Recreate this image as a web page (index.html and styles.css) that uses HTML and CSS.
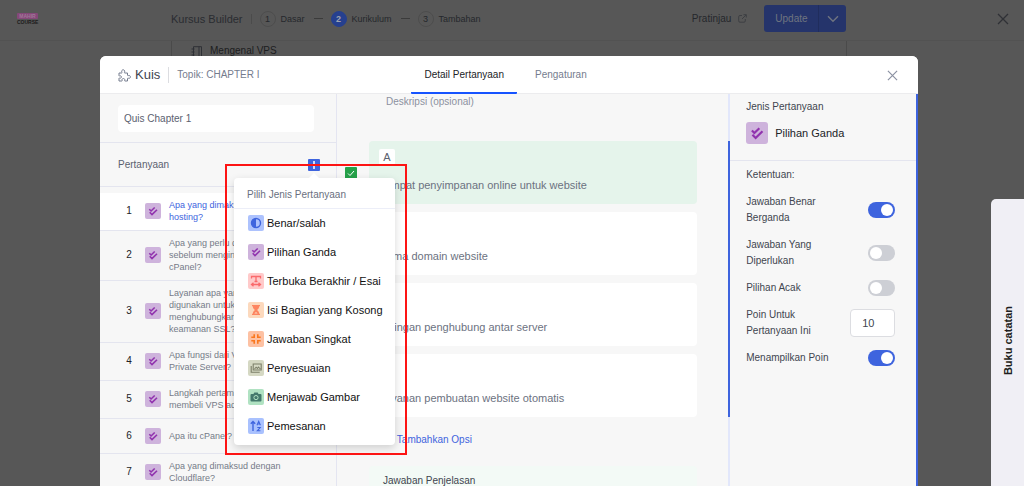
FILE: index.html
```html
<!DOCTYPE html>
<html lang="id">
<head>
  <meta charset="UTF-8">
  <meta name="viewport" content="width=device-width, initial-scale=1.0">
  <title>Kursus Builder</title>
  <link rel="stylesheet" href="styles.css">
</head>
<body>
  <!-- Icons shared by several rows -->
  <svg class="sprite" aria-hidden="true">
    <symbol id="i-check" viewBox="0 0 16 16"><path d="M4.300 6.200l1.800 1.800 3.600-3.500M4.700 9.300l2.300 2.300L12 6.700" fill="none" stroke="currentColor" stroke-width="1.600"/></symbol>
    <symbol id="i-close" viewBox="0 0 12 12"><path d="M1 1l10 10M11 1L1 11" fill="none" stroke="currentColor" stroke-width="1.3"/></symbol>
  </svg>

  <!-- Page behind the modal -->
  <header class="topbar">
    <a href="#" class="logo"><span class="logo-top">MAHIR</span><span class="logo-sub">COURSE</span></a>
    <div class="topbar-main">
      <span class="builder-title">Kursus Builder</span>
      <ol class="stepper">
        <li><span class="num">1</span>Dasar</li>
        <li class="current"><span class="num">2</span>Kurikulum</li>
        <li><span class="num">3</span>Tambahan</li>
      </ol>
      <a href="#" class="preview">Pratinjau
        <svg width="9" height="9" viewBox="0 0 9 9"><path d="M4 1.5H2a1.3 1.3 0 0 0-1.3 1.3v4A1.3 1.3 0 0 0 2 8.2h4a1.3 1.3 0 0 0 1.3-1.3V5M5.5.7h2.8v2.8M8.2.8L4 5" fill="none" stroke="currentColor" stroke-width="1"/></svg>
      </a>
      <div class="update">
        <button type="button" class="update-btn">Update</button>
        <button type="button" class="update-more" aria-label="Opsi lain"><svg width="12" height="8" viewBox="0 0 12 8"><path d="M1 1.2l5 5 5-5" fill="none" stroke="currentColor" stroke-width="1.4"/></svg></button>
      </div>
    </div>
    <button type="button" class="page-close" aria-label="Keluar"><svg width="12" height="12"><use href="#i-close"/></svg></button>
  </header>
  <div class="curriculum">
    <svg width="11" height="12" viewBox="0 0 11 12"><path d="M2.5.7h8v10.6h-8zM8 .7v10.6M.5 3h3M.5 6h3M.5 9h3" fill="none" stroke="currentColor"/></svg>
    <span>Mengenal VPS</span>
  </div>

  <!-- Quiz modal -->
  <div class="modal" role="dialog" aria-label="Kuis">
    <div class="modal-head">
      <div class="modal-title">
        <svg width="13" height="13" viewBox="0 0 13 13"><path d="M1 4h2.6c.5 0 .5-.5.3-.9C3.300 1.900 4 .8 5.200.8s1.900 1.100 1.300 2.300c-.2.4-.2.9.3.9h2.700v2.200c0 .5.5.6.9.4 1-.5 2 .2 2 1.300s-1 1.800-2 1.300c-.4-.2-.9-.1-.9.4V12H7c-.5 0-.5-.4-.3-.8.4-.9-.3-1.700-1.300-1.700s-1.700.8-1.300 1.700c.2.4.2.8-.3.800H1V9.400c0-.5.400-.5.800-.3.9.3 1.600-.3 1.600-1.100S2.700 6.500 1.800 6.900c-.4.2-.8.2-.8-.3z" fill="none" stroke="currentColor"/></svg>
        <h1>Kuis</h1>
        <span class="topic">Topik: CHAPTER I</span>
      </div>
      <nav class="tabs">
        <a href="#" class="active">Detail Pertanyaan</a>
        <a href="#">Pengaturan</a>
      </nav>
      <button type="button" class="modal-close" aria-label="Tutup"><svg width="11" height="11"><use href="#i-close"/></svg></button>
    </div>

    <div class="modal-body">
      <!-- Question list -->
      <aside class="sidebar">
        <div class="quiz-name"><input type="text" value="Quis Chapter 1" aria-label="Judul kuis"></div>
        <div class="list-head">
          <h2>Pertanyaan</h2>
          <div class="add-wrap">
            <button type="button" class="add" aria-label="Tambah pertanyaan"><svg width="12" height="12" viewBox="0 0 12 12"><path d="M6 2v8M2 6h8" fill="none" stroke="currentColor" stroke-width="1.500"/></svg></button>
            <div class="type-menu">
              <h3>Pilih Jenis Pertanyaan</h3>
              <ul>
                <li><button type="button"><span class="ico blue"><svg viewBox="0 0 16 16"><circle cx="8" cy="8" r="4.500" fill="none" stroke="currentColor" stroke-width="1.400"/><path d="M8 3.500a4.500 4.500 0 0 0 0 9z" fill="currentColor"/></svg></span>Benar/salah</button></li>
                <li><button type="button"><span class="ico purple"><svg><use href="#i-check"/></svg></span>Pilihan Ganda</button></li>
                <li><button type="button"><span class="ico red"><svg viewBox="0 0 16 16"><path d="M3.500 5.500v-2h9v2M8 3.500v5M6.500 8.500h3M3.500 11.500h9M5.500 9.800l-2 1.700 2 1.700M10.500 9.800l2 1.700-2 1.700" fill="none" stroke="currentColor" stroke-width="1.300"/></svg></span>Terbuka Berakhir / Esai</button></li>
                <li><button type="button"><span class="ico peach"><svg viewBox="0 0 16 16"><path d="M4 3h8v1.300h-.8c0 1.900-1 2.900-2.100 3.700 1.100.8 2.100 1.800 2.100 3.700h.8V13H4v-1.300h.8c0-1.900 1-2.900 2.100-3.700-1.100-.8-2.100-1.800-2.100-3.700H4z" fill="currentColor"/><path d="M6.300 11.500L8 9.900l1.700 1.600z" fill="#fcd9bd"/></svg></span>Isi Bagian yang Kosong</button></li>
                <li><button type="button"><span class="ico orange"><svg viewBox="0 0 16 16"><path d="M6.200 3.300v2.900H3.300M9.800 3.300v2.900h2.900M6.200 12.700V9.800H3.300M9.800 12.700V9.800h2.900" fill="none" stroke="currentColor" stroke-width="1.600"/></svg></span>Jawaban Singkat</button></li>
                <li><button type="button"><span class="ico olive"><svg viewBox="0 0 16 16"><path d="M5.200 4h8v6h-8zM3.200 6v6.200h8.500M6.500 9l1.600-1.800 1.300 1.300L10.500 7l1.800 2" fill="none" stroke="currentColor" stroke-width="1.100"/></svg></span>Penyesuaian</button></li>
                <li><button type="button"><span class="ico green"><svg viewBox="0 0 16 16"><path d="M3.500 5H5.500l.8-1.500h3.400l.8 1.500h2a1 1 0 0 1 1 1v5.500a1 1 0 0 1-1 1h-9a1 1 0 0 1-1-1V6a1 1 0 0 1 1-1z" fill="currentColor"/><circle cx="8" cy="8.600" r="2.100" fill="none" stroke="#b0e2c2" stroke-width="1"/></svg></span>Menjawab Gambar</button></li>
                <li><button type="button"><span class="ico sky"><svg viewBox="0 0 16 16"><path d="M5 13V3.500M2.800 5.700L5 3.500l2.200 2.200" fill="none" stroke="currentColor" stroke-width="1.400"/><path d="M9 7.300l1.700-4 1.700 4M9.500 6h2.400M9.300 9.500h2.900l-2.900 3.300h3.100" fill="none" stroke="currentColor" stroke-width="1.100"/></svg></span>Pemesanan</button></li>
              </ul>
            </div>
          </div>
        </div>
        <ol class="questions">
          <li class="active"><span class="no">1</span><span class="ico purple"><svg><use href="#i-check"/></svg></span><a href="#">Apa yang dimaksud dengan hosting?</a></li>
          <li><span class="no">2</span><span class="ico purple"><svg><use href="#i-check"/></svg></span><a href="#">Apa yang perlu diketahui sebelum menginstalasi cPanel?</a></li>
          <li><span class="no">3</span><span class="ico purple"><svg><use href="#i-check"/></svg></span><a href="#">Layanan apa yang digunakan untuk menghubungkan layanan keamanan SSL?</a></li>
          <li><span class="no">4</span><span class="ico purple"><svg><use href="#i-check"/></svg></span><a href="#">Apa fungsi dari Virtual Private Server?</a></li>
          <li><span class="no">5</span><span class="ico purple"><svg><use href="#i-check"/></svg></span><a href="#">Langkah pertama untuk membeli VPS adalah?</a></li>
          <li><span class="no">6</span><span class="ico purple"><svg><use href="#i-check"/></svg></span><a href="#">Apa itu cPanel?</a></li>
          <li><span class="no">7</span><span class="ico purple"><svg><use href="#i-check"/></svg></span><a href="#">Apa yang dimaksud dengan Cloudflare?</a></li>
        </ol>
      </aside>

      <!-- Answer options -->
      <main class="editor">
        <p class="desc">Deskripsi (opsional)</p>
        <ul class="options">
          <li class="correct">
            <span class="mark"><svg width="8" height="8" viewBox="0 0 8 8"><path d="M1 4.500l2 2L7 2" fill="none" stroke="currentColor" stroke-width="1"/></svg></span>
            <span class="letter">A</span><p>Tempat penyimpanan online untuk website</p>
          </li>
          <li><span class="letter">B</span><p>Nama domain website</p></li>
          <li><span class="letter">C</span><p>Jaringan penghubung antar server</p></li>
          <li><span class="letter">D</span><p>Layanan pembuatan website otomatis</p></li>
        </ul>
        <button type="button" class="add-option"><span>+</span>Tambahkan Opsi</button>
        <div class="explain">Jawaban Penjelasan</div>
      </main>
      <div class="scroll"></div>

      <!-- Question settings -->
      <aside class="settings">
        <div class="type">
          <h2>Jenis Pertanyaan</h2>
          <p><span class="ico purple big"><svg><use href="#i-check"/></svg></span>Pilihan Ganda</p>
        </div>
        <form class="rules">
          <h2>Ketentuan:</h2>
          <div class="rule"><label for="multi">Jawaban Benar Berganda</label><input type="checkbox" id="multi" class="switch" checked></div>
          <div class="rule"><label for="required">Jawaban Yang Diperlukan</label><input type="checkbox" id="required" class="switch"></div>
          <div class="rule"><label for="random">Pilihan Acak</label><input type="checkbox" id="random" class="switch"></div>
          <div class="rule"><label for="points">Poin Untuk Pertanyaan Ini</label><input type="text" id="points" class="points" value="10"></div>
          <div class="rule"><label for="show">Menampilkan Poin</label><input type="checkbox" id="show" class="switch" checked></div>
        </form>
      </aside>
    </div>
  </div>

  <button type="button" class="notebook"><span>Buku catatan</span></button>
  <div class="highlight"></div>
</body>
</html>
```
FILE: styles.css
```css
* { box-sizing: border-box; }
html, body { height: 100%; }
body { margin: 0; overflow: hidden; background: #575757; color: #41454f; font: 10px/16px "Liberation Sans", Arial, sans-serif; }
h1, h2, h3, p, ul, ol { margin: 0; padding: 0; font-weight: normal; }
h2, h3 { font-size: 10px; }
ul, ol { list-style: none; }
a { color: inherit; text-decoration: none; }
button { font: inherit; color: inherit; background: none; border: none; padding: 0; cursor: pointer; }
input { font: inherit; margin: 0; }
svg { display: block; flex: none; }
.sprite { position: absolute; width: 0; height: 0; }

/* page header */
.topbar { display: flex; align-items: center; height: 41px; padding: 0 15px 3px 17px; border-bottom: 1px solid #525252; color: #25272c; }
.logo { width: 21px; text-align: center; font-weight: bold; font-size: 5px; line-height: 6px; }
.logo span { display: block; }
.logo-top { background: #854879; color: #a07698; border-radius: 1px; }
.logo-sub { color: #1b1b1b; }
.topbar-main { display: flex; align-items: center; width: 68%; margin-left: 133px; }
.builder-title { font-size: 11px; padding-right: 8px; border-right: 1px solid #4b4b4b; line-height: 10px; color: #2a2c31; }
.stepper { display: flex; align-items: center; margin-left: 8px; font-size: 9px; }
.stepper li { display: flex; align-items: center; gap: 5px; }
.stepper li + li::before { content: ""; width: 9px; height: 1px; margin: 0 3px 0 9px; background: #3b3b3b; }
.num { width: 16px; height: 16px; line-height: 14px; text-align: center; border: 1px solid #4d4d4d; border-radius: 50%; }
.current .num { background: #26408f; border-color: #26408f; color: #a0a4b0; font-weight: bold; }
.preview { display: flex; align-items: center; gap: 7px; margin-left: auto; }
.preview svg { color: #3d3f43; }
.update { display: flex; height: 27px; margin-left: 17px; background: #25346b; border-radius: 3px; color: #6f7480; }
.update-btn { padding: 0 10px 0 11px; }
.update-more { padding: 0 7px 0 8px; border-left: 1px solid #202d5d; }
.page-close { margin-left: auto; color: #2f3136; }
.curriculum { display: flex; gap: 8px; width: 66%; height: 80px; margin-left: 171px; padding: 2px 19px; border: 1px solid #4a4a4a; border-top: none; color: #1c1d20; }
.curriculum svg { margin-top: 3px; color: #2f3136; }

/* modal */
.modal { position: absolute; top: 56px; bottom: 0; left: 100px; width: calc(80% - 1px); display: flex; flex-direction: column; background: #f7f7f7; border-radius: 6px 6px 0 0; }
.modal-head { flex: none; display: grid; grid-template-columns: 1fr auto 1fr; align-items: center; height: 38px; padding: 0 20px 0 18px; background: #fff; border-bottom: 1px solid #ececee; border-radius: 6px 6px 0 0; }
.modal-title { display: flex; align-items: center; gap: 4px; color: #757c8e; }
.modal-title h1 { font-size: 13px; color: #41454f; }
.topic { margin-left: 4px; padding-left: 8px; border-left: 1px solid #dcdde1; }
.tabs { display: flex; align-self: stretch; }
.tabs a { padding: 11px 18px 0 13px; line-height: 16px; color: #757c8e; height: 38px; }
.tabs .active { color: #212327; padding-right: 13px; margin-right: 5px; border-bottom: 2px solid #1653ff; border-radius: 1px; }
.modal-close { justify-self: end; color: #8b91a2; }
.modal-body { flex: 1; min-height: 0; display: grid; grid-template-columns: 237px 1fr 2px 188px; }

/* icon tiles */
.ico { flex: none; width: 16px; height: 16px; border-radius: 2px; }
.ico svg { width: 100%; height: 100%; }
.ico.big { width: 22px; height: 22px; border-radius: 3px; }
.blue { background: #adc2fd; color: #3e64de; }
.purple { background: #ceb3dc; color: #9133ae; }
.red { background: #ffcaca; color: #fa6a6c; }
.peach { background: #fcd9bd; color: #fd8560; }
.orange { background: #fdc1a3; color: #fa781e; }
.olive { background: #d5d8c3; color: #7c7f69; }
.green { background: #b0e2c2; color: #44796c; }
.sky { background: #a9c1fe; color: #3e64de; }

/* left column */
.sidebar { border-right: 1px solid #e4e5f1; }
.quiz-name { padding: 11px 22px 10px 18px; border-bottom: 1px solid #e4e5ef; }
.quiz-name input { display: block; width: 100%; height: 27px; padding: 0 6px; border: none; border-radius: 4px; background: #fff; color: #5b616f; }
.list-head { display: flex; align-items: center; justify-content: space-between; height: 44px; padding: 0 16px 0 18px; border-bottom: 1px solid #e4e5ef; color: #5b616f; }
.add-wrap { position: relative; }
.add { display: block; width: 12px; height: 12px; border-radius: 1px; background: #3e64de; color: #fff; }
.questions { padding-top: 6px; }
.questions li { display: flex; align-items: center; min-height: 35px; padding: 6px 0 7px; border-bottom: 1px solid #e4e5ef; }
.questions .no { width: 45px; padding-left: 13px; text-align: center; color: #212327; }
.questions .ico { margin-right: 8px; }
.questions a { width: 112px; font-size: 9px; line-height: 12px; color: #757b88; }
.questions .active { background: #fff; }
.questions .active a { color: #3e64de; }

/* question type menu */
.type-menu { position: absolute; z-index: 2; top: 19px; right: -75px; width: 161px; background: #fff; border-radius: 4px; box-shadow: 0 3px 9px rgba(0,0,0,0.16); }
.type-menu::before { content: ""; position: absolute; top: -5px; left: 75px; border: 5px solid transparent; border-top: none; border-bottom-color: #fff; }
.type-menu h3 { padding: 9px 13px 5px; border-bottom: 1px solid #eceef8; color: #6a7080; }
.type-menu ul { padding: 0 0 4px; }
.type-menu button { display: flex; align-items: center; gap: 3px; width: 100%; height: 29px; padding-left: 14px; font-size: 11px; color: #111; white-space: nowrap; }

/* middle column */
.editor { padding: 0 31px 0 32px; overflow: hidden; }
.desc { margin-bottom: 32px; padding-left: 17px; line-height: 15px; color: #8c919f; }
.options { display: grid; gap: 8px; }
.options li { position: relative; height: 63px; padding: 8px 10px; border-radius: 4px; background: #fff; font-size: 11px; color: #6c7281; }
.options .correct { background: #e5f4eb; }
.letter { display: block; width: 16px; height: 16px; margin-bottom: 12px; border-radius: 2px; background: #fff; text-align: center; color: #5b616f; }
.mark { position: absolute; top: 26px; left: -24px; padding: 2px; border-radius: 1px; background: #25a149; color: #fff; }
.add-option { display: flex; gap: 6px; margin: 15px 0 18px 16px; color: #3e64de; }
.explain { padding: 7px 14px; height: 60px; border-radius: 4px; background: #f3faf6; }

/* right column */
.scroll { background: linear-gradient(#3e64de, #3e64de) 0 47px / 100% 276px no-repeat #e2e7fb; }
.settings { border-right: 2px solid #3e64de; }
.type { padding: 5px 16px 16px; border-bottom: 1px solid #e4e5ef; }
.type p { display: flex; align-items: center; gap: 7px; margin-top: 7px; font-size: 11px; color: #212327; }
.rules { display: grid; gap: 11px; padding: 6px 21px 0 16px; }
.rule { display: flex; align-items: center; justify-content: space-between; }
.rule label { width: 86px; }
.switch { appearance: none; flex: none; width: 27px; height: 16px; padding: 2px; border-radius: 8px; background: #cdcfd5; cursor: pointer; }
.switch::before { content: ""; display: block; width: 12px; height: 12px; border-radius: 50%; background: #fff; }
.switch:checked { background: #3e64de; }
.switch:checked::before { margin-left: auto; }
.points { width: 45px; height: 28px; padding: 0 11px; border: 1px solid #dcdde1; border-radius: 4px; background: #fff; font-size: 11px; color: #41454f; }

/* notebook tab */
.notebook { position: absolute; top: 199px; right: 0; bottom: 0; width: 33px; background: #f0eff5; border-radius: 5px 0 0 0; color: #1e1e20; font-size: 11px; font-weight: bold; }
.notebook span { display: inline-block; writing-mode: vertical-rl; transform: rotate(180deg); }

/* red frame around the type menu */
.highlight { position: absolute; z-index: 3; top: 164px; left: 225px; width: 182px; height: 291px; border: 2px solid #fd1414; pointer-events: none; }
```
